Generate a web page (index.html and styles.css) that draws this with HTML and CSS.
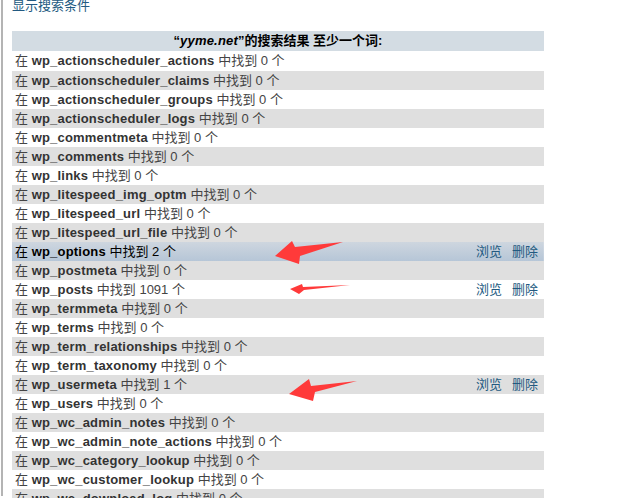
FILE: index.html
```html
<!DOCTYPE html>
<html lang="zh-CN">
  <head>
    <meta charset="UTF-8" />
    <link rel="stylesheet" href="styles.css">
    <title>搜索结果</title>
  </head>
  <body>
    <div class="frame">
      <a class="toggle" href="#">显示搜索条件</a>

      <table class="results">
        <thead>
          <tr>
            <th colspan="2">“<em>yyme.net</em>”的搜索结果 至少一个词:</th>
          </tr>
        </thead>
        <tbody>
          <tr><td>在 <b>wp_actionscheduler_actions</b> 中找到 0 个</td><td></td></tr>
          <tr><td>在 <b>wp_actionscheduler_claims</b> 中找到 0 个</td><td></td></tr>
          <tr><td>在 <b>wp_actionscheduler_groups</b> 中找到 0 个</td><td></td></tr>
          <tr><td>在 <b>wp_actionscheduler_logs</b> 中找到 0 个</td><td></td></tr>
          <tr><td>在 <b>wp_commentmeta</b> 中找到 0 个</td><td></td></tr>
          <tr><td>在 <b>wp_comments</b> 中找到 0 个</td><td></td></tr>
          <tr><td>在 <b>wp_links</b> 中找到 0 个</td><td></td></tr>
          <tr><td>在 <b>wp_litespeed_img_optm</b> 中找到 0 个</td><td></td></tr>
          <tr><td>在 <b>wp_litespeed_url</b> 中找到 0 个</td><td></td></tr>
          <tr><td>在 <b>wp_litespeed_url_file</b> 中找到 0 个</td><td></td></tr>
          <tr class="hover">
            <td>在 <b>wp_options</b> 中找到 2 个</td>
            <td class="actions"><a href="#">浏览</a><a href="#">删除</a></td>
          </tr>
          <tr><td>在 <b>wp_postmeta</b> 中找到 0 个</td><td></td></tr>
          <tr>
            <td>在 <b>wp_posts</b> 中找到 1091 个</td>
            <td class="actions"><a href="#">浏览</a><a href="#">删除</a></td>
          </tr>
          <tr><td>在 <b>wp_termmeta</b> 中找到 0 个</td><td></td></tr>
          <tr><td>在 <b>wp_terms</b> 中找到 0 个</td><td></td></tr>
          <tr><td>在 <b>wp_term_relationships</b> 中找到 0 个</td><td></td></tr>
          <tr><td>在 <b>wp_term_taxonomy</b> 中找到 0 个</td><td></td></tr>
          <tr>
            <td>在 <b>wp_usermeta</b> 中找到 1 个</td>
            <td class="actions"><a href="#">浏览</a><a href="#">删除</a></td>
          </tr>
          <tr><td>在 <b>wp_users</b> 中找到 0 个</td><td></td></tr>
          <tr><td>在 <b>wp_wc_admin_notes</b> 中找到 0 个</td><td></td></tr>
          <tr><td>在 <b>wp_wc_admin_note_actions</b> 中找到 0 个</td><td></td></tr>
          <tr><td>在 <b>wp_wc_category_lookup</b> 中找到 0 个</td><td></td></tr>
          <tr><td>在 <b>wp_wc_customer_lookup</b> 中找到 0 个</td><td></td></tr>
          <tr><td>在 <b>wp_wc_download_log</b> 中找到 0 个</td><td></td></tr>
        </tbody>
      </table>
    </div>

    <!-- red annotation arrows drawn over the screenshot -->
    <svg class="arrows" viewBox="0 0 636 498" width="636" height="498">
      <polygon points="275,256 292,241 295,247 343,242 300,256 299,264" />
      <polygon points="290,289 302,284 303,287 350,285 304,290 299,294" />
      <polygon points="289,394 309,379 311,386 357,381 315,392 313,401" />
    </svg>
  </body>
</html>
```

FILE: styles.css
```css
* {
  margin: 0;
  padding: 0;
  box-sizing: border-box;
}

html,
body {
  height: 100%;
  overflow: hidden;
}

body {
  position: relative;
  background: #fff;
  font-family: "Liberation Sans", "Noto Sans CJK SC", sans-serif;
  font-size: 13px;
  color: #444;
}

.frame {
  height: 100%;
  margin-left: 1px;
  padding-left: 9px;
  border-left: 2px solid #b4b4b4;
}

.toggle {
  display: block;
  margin-top: -2px;
  height: 33px;
  line-height: 15px;
  color: #235a81;
  text-decoration: none;
}

.results {
  width: 532px;
  border-collapse: collapse;
  font-size: 13px;
}

.results th {
  height: 20px;
  padding: 0 4px;
  line-height: 14px;
  background: #d3dce3;
  color: #000;
  font-weight: bold;
  text-align: center;
  white-space: nowrap;
}

.results th em {
  font-style: italic;
  letter-spacing: 0.2px;
}

.results td {
  height: 19px;
  padding: 0 3px;
  line-height: 14px;
  white-space: nowrap;
}

.results tbody tr:first-child td {
  height: 20px;
}

.results tbody tr:nth-child(even) {
  background: #dfdfdf;
}

.results tbody tr.hover {
  background: linear-gradient(#ced6df, #b6c6d7);
  color: #000;
}

.results td b {
  color: #333;
  letter-spacing: 0.2px;
}

.results tr.hover td b {
  color: #000;
}

.results .actions {
  text-align: right;
  padding-right: 6px;
}

.results .actions a {
  color: #235a81;
  text-decoration: none;
  margin-left: 10px;
}

.arrows {
  position: absolute;
  top: 0;
  left: 0;
  pointer-events: none;
}

.arrows polygon {
  fill: #ff3a3a;
}
```
